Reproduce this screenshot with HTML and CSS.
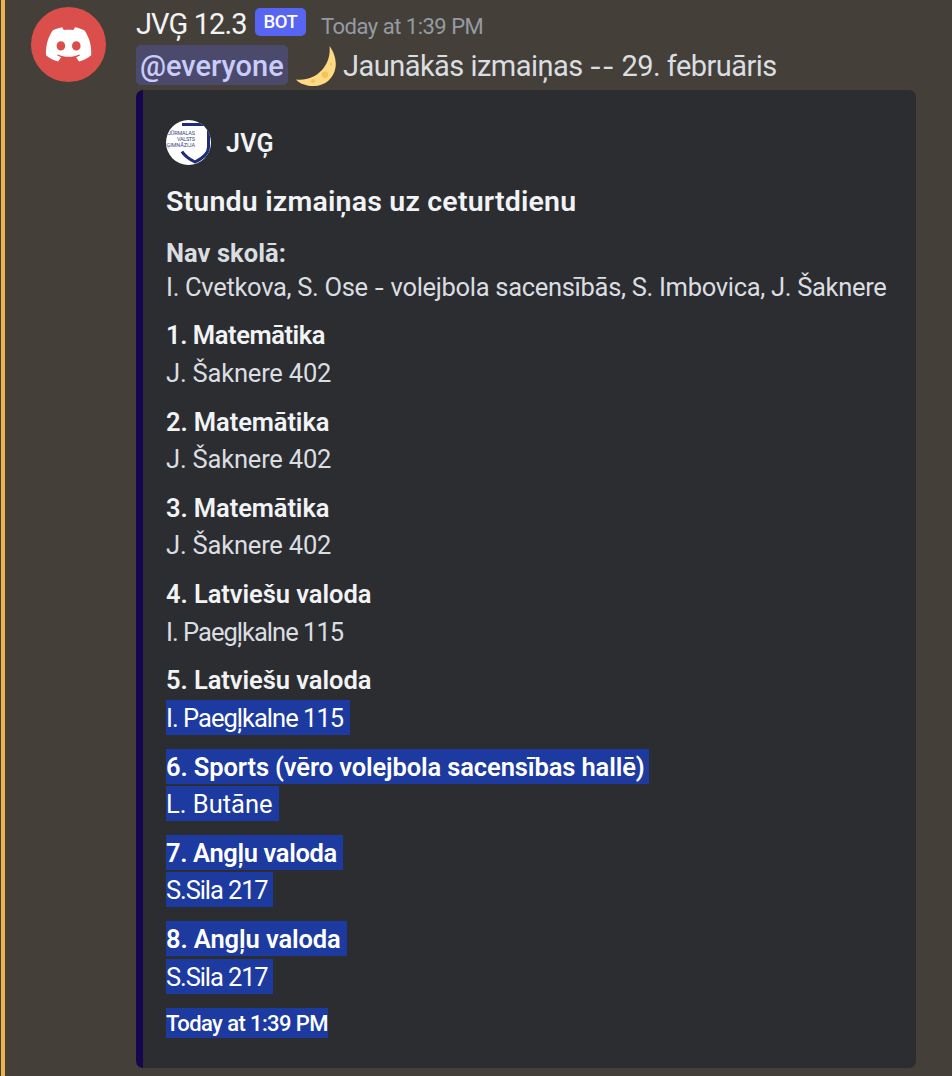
FILE: index.html
```html
<!DOCTYPE html>
<html lang="lv">
<head>
<meta charset="utf-8">
<title>JVĢ 12.3</title>
<link rel="stylesheet" href="styles.css">
</head>
<body>
<main class="message">
  <svg class="avatar" viewBox="0 0 75 75" aria-hidden="true">
    <circle cx="37.5" cy="37.5" r="37.5" fill="#da4f4b"/>
    <path fill="#fff" fill-rule="evenodd" d="M31.2 20.3C27 21 24 22.3 21.6 23.6C17 30.5 14.600 38.500 15.000 48.200C19 51.600 22.800 53.200 27.200 54.400L30.100 50.200C28.600 49.700 27.200 49 26 48.200L27 47.400C33.400 50.500 41.800 50.500 48.200 47.400L49.200 48.200C48 49 46.600 49.700 45.100 50.200L48 54.400C52.400 53.200 56.200 51.600 60.200 48.200C60.700 38.500 58.200 30.500 53.600 23.600C51 22.200 47.800 21 44 20.300L42.500 23.100C39 22.600 36.200 22.600 32.700 23.100ZM29.900 34.200C32.400 34.200 34.200 36.300 34.200 38.900C34.200 41.500 32.400 43.500 29.900 43.500C27.500 43.500 25.600 41.500 25.600 38.900C25.600 36.300 27.500 34.200 29.900 34.200ZM45.300 34.200C47.700 34.200 49.600 36.300 49.600 38.900C49.600 41.500 47.700 43.500 45.300 43.500C42.900 43.500 41 41.500 41 38.900C41 36.300 42.900 34.200 45.300 34.200Z"/>
  </svg>
  <div class="content">
    <header class="head">
      <span class="author">JVĢ 12.3</span>
      <span class="bot">BOT</span>
      <time class="sent">Today at 1:39 PM</time>
    </header>
    <div class="text">
      <span class="mention">@everyone</span>
      <svg class="moon" viewBox="0 0 40 40" aria-hidden="true">
        <path fill="#ffd983" d="M33.500 0C38 6 40.500 14 39.600 21C38.200 32 29 40 18 40C10 40 3.500 37.500 0 33.400C10 34.600 19 31.500 25.500 24.500C32 17.500 34.500 9 33.500 0Z"/>
        <circle cx="29" cy="28.700" r="3.300" fill="#f4c553"/>
        <circle cx="17" cy="35" r="2" fill="#f4c553"/>
        <circle cx="35" cy="18" r="1.300" fill="#f4c553"/>
      </svg>
      <span class="announce">Jaunākās izmaiņas <span class="dash">--</span> 29. februāris</span>
    </div>
    <article class="embed">
      <div class="source">
        <svg class="crest" viewBox="0 0 45 45" aria-hidden="true">
          <defs><clipPath id="round"><circle cx="22.500" cy="22.500" r="22.500"/></clipPath></defs>
          <g clip-path="url(#round)">
            <rect width="45" height="45" fill="#fff"/>
            <path d="M16 4.500H42.500V27C42.500 34 37 38 29 42C22 38.500 18.500 36 16 31.500" fill="none" stroke="#1d2b78" stroke-width="3"/>
            <g class="crest-text" text-anchor="end">
              <text x="29" y="14.700" textLength="27">JŪRMALAS</text>
              <text x="29" y="20.700" textLength="18">VALSTS</text>
              <text x="29" y="26.700" textLength="28.500">ĢIMNĀZIJA</text>
            </g>
          </g>
        </svg>
        <span class="source-name">JVĢ</span>
      </div>
      <h1 class="title">Stundu izmaiņas uz ceturtdienu</h1>
      <div class="absent"><strong>Nav skolā:</strong><p>I. Cvetkova, S. Ose <span class="hyphen">-</span> volejbola sacensībās, S. Imbovica, J. Šaknere</p></div>
      <dl class="lessons">
        <div class="lesson"><dt><span class="mat1">1. Matemātika</span></dt><dd><span class="sak">J. Šaknere 402</span></dd></div>
        <div class="lesson"><dt><span class="mat">2. Matemātika</span></dt><dd><span class="sak">J. Šaknere 402</span></dd></div>
        <div class="lesson"><dt><span class="mat">3. Matemātika</span></dt><dd><span class="sak">J. Šaknere 402</span></dd></div>
        <div class="lesson"><dt><span class="lat">4. Latviešu valoda</span></dt><dd><span class="pae">I. Paegļkalne 115</span></dd></div>
        <div class="lesson"><dt><span class="lat">5. Latviešu valoda</span></dt><dd><span class="pae sel">I. Paegļkalne 115</span></dd></div>
        <div class="lesson"><dt><span class="spo sel">6. Sports (vēro volejbola sacensības hallē)</span></dt><dd><span class="but sel">L. Butāne</span></dd></div>
        <div class="lesson"><dt><span class="ang7 sel">7. Angļu valoda</span></dt><dd><span class="sil sel">S.Sila 217</span></dd></div>
        <div class="lesson"><dt><span class="ang8 sel">8. Angļu valoda</span></dt><dd><span class="sil sel">S.Sila 217</span></dd></div>
      </dl>
      <footer class="foot"><time class="foot-time">Today at 1:39 PM</time></footer>
    </article>
  </div>
</main>
</body>
</html>
```
FILE: styles.css
```css
*{box-sizing:border-box}
body{margin:0;background:#444039;color:#dbdee1;font-family:Roboto,"Noto Sans",sans-serif;white-space:nowrap}
.message{display:flex;align-items:flex-start;height:1076px;margin-left:1px;padding:7px 0 0 26px;border-left:4px solid #eeb34f;overflow:hidden}
.avatar{width:75px;height:75px;flex:none}
.content{margin-left:30px;width:780px;flex:none}
.head{display:flex;height:38px}
.author{width:119px;font-size:29px;line-height:34px;letter-spacing:-.9px;color:#f2f3f5}
.bot{margin-top:1px;width:51px;height:28px;border-radius:5px;background:#5865f2;color:#fff;font-size:18.500px;line-height:28px;text-align:center;font-weight:500;letter-spacing:-.5px}
.sent{margin-left:15px;padding-top:7px;font-size:22px;line-height:26px;letter-spacing:-.5px;color:#949ba4}
.text{display:flex;height:45px}
.mention{width:152px;height:40px;padding-left:4px;border-radius:5px;background:#4c4a6c;color:#c9cdfb;font-size:29px;line-height:42px;font-weight:500}
.moon{width:40px;height:40px;margin:1px 7px 0 8px;flex:none}
.announce{font-size:29px;line-height:42px;letter-spacing:-.53px}
.dash{font-family:Inter,sans-serif;font-size:27px;letter-spacing:.3px}
.hyphen{font-family:Inter,sans-serif;font-size:24px}
.embed{height:977.500px;padding:30px 22px 30px 23px;border-left:7px solid #15064f;border-radius:7px;background:#2b2d31}
.source{display:flex;align-items:center;height:45px}
.crest{width:45px;height:45px}
.crest-text{font:400 5.500px Roboto,sans-serif;fill:#3c4785}
.source-name{margin-left:15px;padding-top:2px;font-size:25px;line-height:30px;font-weight:600;letter-spacing:.3px;color:#f2f3f5}
.title{margin:18px 0 0;font-size:28.500px;line-height:38px;font-weight:600;letter-spacing:.2px;color:#f2f3f5}
.absent{height:68px;margin-top:15px;font-size:26px;line-height:34px}
.absent strong{display:block;font-size:25.500px;font-weight:700;letter-spacing:.05px}
.absent p{margin:0;font-size:25.500px;letter-spacing:-.31px}
.lessons{margin:13.450px 0 0}
.lesson{height:86.250px}
.lesson dt{height:37.500px;font-size:25.500px;line-height:37px;font-weight:600;color:#f2f3f5}
.lesson dd{height:35px;margin:0;font-size:25.500px;line-height:37px}
.lesson span{display:inline-block;height:35px;vertical-align:top}
.mat1{letter-spacing:-.43px}
.mat{letter-spacing:-.1px}
.lat{letter-spacing:-.06px}
.sak{letter-spacing:-.19px}
.pae{letter-spacing:-.98px}
.spo{letter-spacing:-.12px}
.but{letter-spacing:0}
.ang7{letter-spacing:-.36px}
.ang8{letter-spacing:-.1px}
.sil{letter-spacing:-1.1px}
.sel{background:#1c3a9f;color:#fff}
.pae.sel{width:184px}
.spo.sel{width:483px}
.but.sel{width:113px}
.ang7.sel{width:177px}
.ang8.sel{width:181px}
.sil.sel{width:107px}
.foot{margin-top:.550px}
.foot-time{display:block;width:162px;height:30px;background:#1c3a9f;color:#fff;font-size:22px;line-height:31px;font-weight:500;letter-spacing:-.6px}
```
